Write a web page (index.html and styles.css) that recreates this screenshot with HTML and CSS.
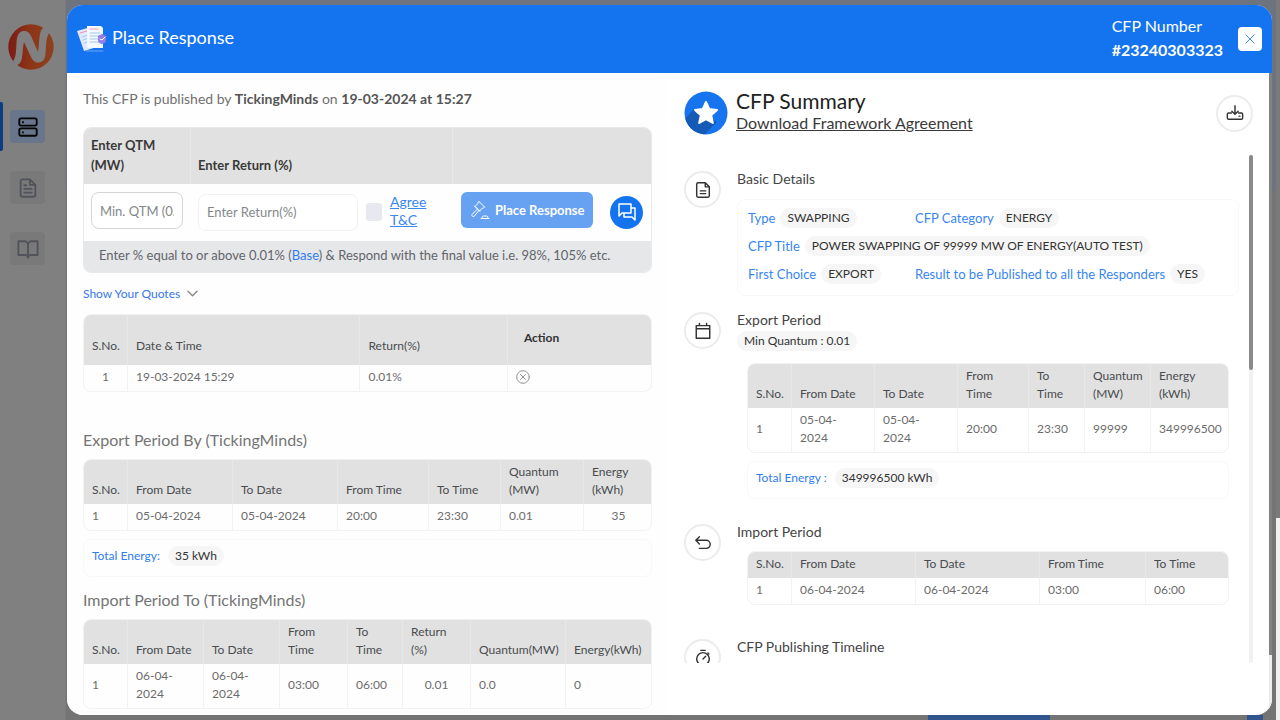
FILE: index.html
```html
<!DOCTYPE html>
<html lang="en">
<head>
<meta charset="utf-8">
<title>Place Response</title>
<link rel="stylesheet" href="styles.css">
</head>
<body>
<div class="page">
  <nav class="sidebar" aria-label="Main">
    <svg class="logo" viewBox="0 0 46 46" aria-hidden="true">
      <defs><linearGradient id="lg" x1="0" y1="0" x2="1" y2="0"><stop offset="0" stop-color="#7a1c15"/><stop offset=".5" stop-color="#8e3517"/><stop offset="1" stop-color="#8a4220"/></linearGradient></defs>
      <circle cx="23" cy="23" r="22.700" fill="url(#lg)"/>
      <path d="M5 37C8 34 8 27 8.500 19C9 11 11 7.500 15.500 7C19 6.600 21.500 8.500 23 12L30 28C31 22 31 15 32 10C33 5 35.500 2.500 39.500 3L41.500 8.500C38 13 38 22 37.500 29C37.200 36 34.500 38.500 30 38.500C26.500 38.500 24.500 36 23 33L16 18C14.500 23 15 29 14 34C13 39 10.500 41.500 8 41Z" fill="#808080"/>
    </svg>
    <a class="nav-item active" href="#" aria-label="Requests"><svg viewBox="0 0 24 24"><rect x="2.500" y="2.500" width="19" height="8" rx="2"/><rect x="2.500" y="13.500" width="19" height="8" rx="2"/><path d="M6.500 6.500v.5M6.500 17.500v.5"/></svg></a>
    <a class="nav-item" href="#" aria-label="Documents"><svg viewBox="0 0 24 24"><path d="M14 2.500H6a2 2 0 0 0-2 2v15a2 2 0 0 0 2 2h12a2 2 0 0 0 2-2V8.500zM14 2.500v6h6M8 9h2M8 13h8M8 17h8"/></svg></a>
    <a class="nav-item" href="#" aria-label="Library"><svg viewBox="0 0 24 24"><path d="M1.500 3.500h6.500a4 4 0 0 1 4 4v14a3 3 0 0 0-3-3H1.500zM22.500 3.500H16a4 4 0 0 0-4 4v14a3 3 0 0 1 3-3h7.500z"/></svg></a>
  </nav>
  <div class="backdrop"><span class="page-action"></span><span class="page-action small"></span></div>
  <div class="page-scroll"><span></span></div>
</div>

<div class="modal" role="dialog" aria-labelledby="dlg-title">
  <header class="modal-head">
    <svg class="papers" viewBox="0 0 30 28" aria-hidden="true">
      <path d="M0 6l14-4 6 20-13 4z" fill="#dfe9ff"/><path d="M3 8l7-2" stroke="#f08bb6" stroke-width="1"/><path d="M5 12l6-2M6 15l6-2M7 18l6-2" stroke="#a9c6f5"/>
      <path d="M10 1h14l2 2v20H12a2 2 0 0 1-2-2z" fill="#f5f8ff"/><path d="M13 4h8" stroke="#f29ac0"/><path d="M13 8h10M13 11h10M13 14h8M13 17h10" stroke="#9cc9ee"/><path d="M9 26h17" stroke="#6da6f8"/>
      <path d="M25 9l4 2v4q0 3-4 4-4-1-4-4v-4z" fill="#927ce6"/><path d="M23 14l2 1 3-3" fill="none" stroke="#fff"/>
    </svg>
    <h1 id="dlg-title">Place Response</h1>
    <div class="cfp-number"><span>CFP Number</span><strong>#23240303323</strong></div>
    <button class="close" type="button" aria-label="Close"><svg viewBox="0 0 12 12"><path d="M1 1l10 10M11 1L1 11"/></svg></button>
  </header>

  <div class="modal-body">
    <main class="response">
      <p class="published">This CFP is published by <strong>TickingMinds</strong> on <strong>19-03-2024 at 15:27</strong></p>

      <form class="quote-form">
        <div class="form-head"><label for="qtm">Enter QTM (MW)</label><label for="ret">Enter Return (%)</label><span></span></div>
        <div class="form-row">
          <input id="qtm" class="field strong-field" type="text" placeholder="Min. QTM (0.01)">
          <div class="return-cell">
            <input id="ret" class="field" type="text" placeholder="Enter Return(%)">
            <input id="agree" class="check" type="checkbox" aria-label="Agree T&amp;C">
            <a class="terms" href="#">Agree T&amp;C</a>
          </div>
          <div class="submit-cell">
            <button class="submit" type="button"><svg viewBox="0 0 20 20"><path d="M9 1.500l5.500 5.500M7.500 3L9 1.500M13 8.500L14.500 7M8 3.500L5 6.500l4.500 4.500 3-3M4.500 6L10 11.500M7 9.500L2 14.500a1.500 1.500 0 0 0 2 2L8.500 11M12 17.500q0-1.500 1.500-1.500h3q1.500 0 1.500 1.500M11 18.500h8"/></svg>Place Response</button>
            <button class="chat" type="button" aria-label="Chat"><svg viewBox="0 0 20 20"><path d="M2 2h12v9H5l-3 3zM14 6h4v12l-3-3H7v-4"/></svg></button>
          </div>
        </div>
        <p class="form-note">Enter % equal to or above 0.01% (<b>Base</b>) &amp; Respond with the final value i.e. 98%, 105% etc.</p>
      </form>

      <button class="toggle" type="button">Show Your Quotes<svg viewBox="0 0 12 8"><path d="M1 1l5 5 5-5"/></svg></button>

      <table class="grid quotes">
        <thead><tr><th>S.No.</th><th>Date &amp; Time</th><th>Return(%)</th><th class="action">Action</th></tr></thead>
        <tbody><tr><td class="center">1</td><td>19-03-2024 15:29</td><td>0.01%</td><td><button class="remove" type="button" aria-label="Remove quote"><svg viewBox="0 0 14 14"><circle cx="7" cy="7" r="6.300"/><path d="M4.500 4.500l5 5M9.500 4.500l-5 5"/></svg></button></td></tr></tbody>
      </table>

      <h2>Export Period By (TickingMinds)</h2>
      <table class="grid export">
        <thead><tr><th>S.No.</th><th>From Date</th><th>To Date</th><th>From Time</th><th>To Time</th><th>Quantum (MW)</th><th>Energy (kWh)</th></tr></thead>
        <tbody><tr><td>1</td><td>05-04-2024</td><td>05-04-2024</td><td>20:00</td><td>23:30</td><td>0.01</td><td class="center">35</td></tr></tbody>
      </table>
      <div class="total"><span class="key">Total Energy:</span><span class="pill">35 kWh</span></div>

      <h2>Import Period To (TickingMinds)</h2>
      <table class="grid import">
        <thead><tr><th>S.No.</th><th>From Date</th><th>To Date</th><th>From<br>Time</th><th>To<br>Time</th><th>Return<br>(%)</th><th>Quantum(MW)</th><th>Energy(kWh)</th></tr></thead>
        <tbody><tr><td>1</td><td>06-04-<br>2024</td><td>06-04-<br>2024</td><td>03:00</td><td>06:00</td><td class="center">0.01</td><td>0.0</td><td>0</td></tr></tbody>
      </table>
    </main>

    <aside class="summary">
      <header class="summary-head">
        <svg class="star" viewBox="0 0 44 44" aria-hidden="true"><defs><clipPath id="disc"><circle cx="22" cy="22" r="21.500"/></clipPath></defs><circle cx="22" cy="22" r="21.500" fill="#1674ef"/><path clip-path="url(#disc)" d="M10 18L0 29V44H20L33 31z" fill="#155ab5"/><path d="M22 11l3.200 7 7.800.9-5.800 5.300 1.600 7.800-6.800-3.900-6.800 3.900 1.600-7.800L11 18.900l7.800-.9z" fill="#fff" stroke="#fff" stroke-width="2" stroke-linejoin="round"/></svg>
        <div class="summary-title"><h2>CFP Summary</h2><a href="#">Download Framework Agreement</a></div>
        <button class="round" type="button" aria-label="Download"><svg viewBox="0 0 20 20"><path d="M10 2v9M6.500 8l3.500 3.500L13.500 8M6 10H3Q1.500 10 1.500 11.500v4Q1.500 17 3 17h14q1.500 0 1.500-1.500v-4Q18.500 10 17 10h-3M14.500 13.500h1"/></svg></button>
      </header>
      <div class="scroller">
        <div class="sections">
          <section>
            <span class="round"><svg viewBox="0 0 20 20"><path d="M12.500 2H4.500Q3 2 3 3.500v13Q3 18 4.500 18h11Q17 18 17 16.500v-10zM12.500 2v4.500H17M7 11h6M7 14h6"/></svg></span>
            <div class="content"><h3>Basic Details</h3>
              <dl class="details">
                <div><dt>Type</dt><dd class="pill">SWAPPING</dd></div>
                <div><dt>CFP Category</dt><dd class="pill">ENERGY</dd></div>
                <div class="wide"><dt>CFP Title</dt><dd class="pill">POWER SWAPPING OF 99999 MW OF ENERGY(AUTO TEST)</dd></div>
                <div><dt>First Choice</dt><dd class="pill">EXPORT</dd></div>
                <div><dt>Result to be Published to all the Responders</dt><dd class="pill">YES</dd></div>
              </dl>
            </div>
          </section>
          <section class="exports">
            <span class="round"><svg viewBox="0 0 20 20"><path d="M2.500 4h15v14h-15zM2.500 7.500h15M6 1.500V4M14 1.500V4"/></svg></span>
            <div class="content"><h3>Export Period</h3><span class="pill">Min Quantum : 0.01</span>
              <div class="inset">
                <table class="grid sum-export">
                  <thead><tr><th>S.No.</th><th>From Date</th><th>To Date</th><th>From<br>Time</th><th>To<br>Time</th><th>Quantum (MW)</th><th>Energy (kWh)</th></tr></thead>
                  <tbody><tr><td>1</td><td>05-04-<br>2024</td><td>05-04-<br>2024</td><td>20:00</td><td>23:30</td><td>99999</td><td>349996500</td></tr></tbody>
                </table>
                <div class="total"><span class="key">Total Energy :</span><span class="pill">349996500 kWh</span></div>
              </div>
            </div>
          </section>
          <section class="imports">
            <span class="round"><svg viewBox="0 0 20 20"><path d="M6 3L2 7l4 4M2 7h11.500a4.500 4.500 0 0 1 0 9H6"/></svg></span>
            <div class="content"><h3>Import Period</h3>
              <div class="inset">
                <table class="grid sum-import">
                  <thead><tr><th>S.No.</th><th>From Date</th><th>To Date</th><th>From Time</th><th>To Time</th></tr></thead>
                  <tbody><tr><td>1</td><td>06-04-2024</td><td>06-04-2024</td><td>03:00</td><td>06:00</td></tr></tbody>
                </table>
              </div>
            </div>
          </section>
          <section>
            <span class="round"><svg viewBox="0 0 20 20"><circle cx="10" cy="11" r="7"/><path d="M7.500 1.500h5M10 11l3-3M15.500 4.500l1 1"/></svg></span>
            <div class="content"><h3>CFP Publishing Timeline</h3></div>
          </section>
        </div>
        <div class="track"><span></span></div>
      </div>
    </aside>
    <div class="body-track"><span></span></div>
  </div>
</div>
</body>
</html>
```
FILE: styles.css
```css
* { box-sizing: border-box; }
body {
  margin: 0;
  height: 100vh;
  overflow: hidden;
  font-family: Lato, "Liberation Sans", sans-serif;
  font-size: 14px;
  line-height: 20px;
  color: #3c4043;
}
h1, h2, h3, p, dl, dd { margin: 0; font-weight: 400; }
button { border: 0; padding: 0; background: none; font: inherit; cursor: pointer; }
svg { display: block; flex: none; fill: none; stroke-linecap: round; stroke-linejoin: round; }

/* Page behind the dialog */
.page { display: flex; height: 100vh; background: #808080; }
.sidebar { width: 66px; padding-top: 24px; border-right: 1px solid #7b7b7b; }
.logo { width: 46px; height: 46px; margin: 0 0 40px 8px; }
.nav-item {
  display: grid;
  place-items: center;
  width: 35px;
  height: 33px;
  margin: 0 0 28px 10px;
  border-radius: 4px;
  background: #797979;
}
.nav-item svg { width: 22px; height: 22px; stroke: #505359; stroke-width: 2; }
.nav-item.active { position: relative; background: #69758a; }
.nav-item.active::before {
  content: "";
  position: absolute;
  left: -10px;
  top: -8px;
  width: 3px;
  height: 49px;
  border-radius: 0 2px 2px 0;
  background: #0b3d82;
}
.nav-item.active svg { stroke: #050505; }
.backdrop {
  flex: 1;
  display: flex;
  align-items: flex-end;
  justify-content: flex-end;
  gap: 197px;
  padding-right: 13px;
  background: linear-gradient(#6d7480 190px, #747474 190px);
}
.page-action { width: 122px; height: 5px; background: #30548c; }
.page-action.small { width: 16px; }
.page-scroll { width: 4px; background: #f1f1f1; }
.page-scroll span { display: block; height: 72%; background: #7a7a7a; }

/* Dialog */
.modal {
  position: fixed;
  inset: 5px 8px 5px 67px;
  display: flex;
  flex-direction: column;
  overflow: hidden;
  border-radius: 16px;
  background: #fff;
}
.modal-head {
  display: flex;
  align-items: center;
  flex: none;
  height: 68px;
  padding: 0 10px;
  background: #1473ee;
  color: #fff;
}
.papers { width: 30px; height: 28px; margin-right: 5px; }
.modal-head h1 { flex: 1; padding-bottom: 4px; font-size: 18px; line-height: 24px; }
.cfp-number { display: grid; margin-right: 15px; padding-bottom: 2px; font-size: 16px; line-height: 24px; }
.close { display: grid; place-items: center; width: 24px; height: 24px; border-radius: 4px; background: #fff; }
.close svg { width: 10px; height: 10px; stroke: #1473ee; }
.modal-body { display: flex; flex: 1; min-height: 0; }
.body-track { width: 3px; background: #ececec; }
.body-track span { display: block; height: 582px; background: #828282; }
.response { flex: 1 1 0; min-width: 0; padding: 16px 17px 0 16px; background: #fefefe; }
.summary { flex: 1 1 0; min-width: 0; padding: 18px 16px 0 15px; }

.published { font-size: 14px; color: #707070; margin-bottom: 18px; }
.published strong { color: #555; }

/* Quote form */
.quote-form { overflow: hidden; border: 1px solid #e8e9eb; border-radius: 8px; }
.form-head, .form-row { display: grid; grid-template-columns: 107px 1fr 198px; }
.form-head { height: 56px; background: #e1e1e1; font-size: 13px; font-weight: 700; color: #393939; }
.form-head > * { display: flex; align-items: flex-end; padding: 6px 24px 9px 7px; border-right: 1px solid #e8e8e8; }
.form-head > :last-child { border-right: 0; }
.form-row { height: 57px; align-items: center; }
.field {
  min-width: 0;
  height: 37px;
  padding: 0 8px;
  border: 1px solid #f0f1f2;
  border-radius: 8px;
  background: #fff;
  font: 13px Lato, "Liberation Sans", sans-serif;
  color: #444;
}
.field::placeholder { color: #85888b; opacity: 1; }
.strong-field { width: 92px; margin: 0 0 4px 7px; border-color: #d5d5d5; }
.return-cell { display: flex; align-items: center; gap: 8px; padding: 0 8px 1px 7px; }
.return-cell .field { flex: 0 1 160px; }
.check { flex: none; appearance: none; width: 16px; height: 18px; margin: 0; border-radius: 3px; background: #e8e9f0; }
.terms { width: 40px; padding-bottom: 3px; line-height: 18px; color: #3b86ef; }
.submit-cell { display: flex; align-items: center; justify-content: space-between; padding: 0 8px 1px; }
.submit {
  display: flex;
  align-items: center;
  gap: 5px;
  height: 36px;
  width: 132px;
  padding-left: 9px;
  margin-bottom: 4px;
  border-radius: 6px;
  background: #66a1f2;
  color: #fff;
  font-size: 13px;
  font-weight: 700;
  white-space: nowrap;
}
.submit svg { width: 20px; height: 20px; stroke: #fff; }
.chat { display: grid; place-items: center; width: 33px; height: 33px; border-radius: 50%; background: #1473ee; }
.chat svg { width: 20px; height: 20px; stroke: #fff; stroke-width: 1.500; }
.form-note { padding: 4px 15px 7px; background: #e6e7e9; color: #626569; font-size: 13px; }
.form-note b { font-weight: 400; color: #2f7df0; }

.toggle { display: flex; align-items: center; gap: 7px; margin: 11px 0 10px; color: #3577f0; font-size: 12px; }
.toggle svg { width: 11px; height: 8px; stroke: #888; stroke-width: 1.500; }

/* Tables and summary boxes */
.grid {
  width: 100%;
  table-layout: fixed;
  border-spacing: 0;
  overflow: hidden;
  border: 1px solid #f1f2f2;
  border-radius: 8px;
  font-size: 12px;
  line-height: 18px;
}
.grid th, .grid td { padding: 3px 8px 5px; border-right: 1px solid #f1f2f2; text-align: left; }
.grid th { background: #e1e1e1; border-color: #e8e8e8; color: #494c4f; font-weight: 400; vertical-align: bottom; }
.grid td { color: #6c6c6c; }
.grid th:last-child, .grid td:last-child { border-right: 0; }
.grid td:last-child, .sum-export th:last-child, .import th:last-child { padding-right: 6px; }
.grid th:first-child { width: 44px; padding-right: 0; }
.grid .center { text-align: center; }
.grid .action { padding: 0 16px 4px; vertical-align: middle; font-weight: 700; color: #333; }
.quotes { margin-bottom: 38px; }
.quotes th { height: 50px; padding-bottom: 10px; }
.quotes th:nth-child(2) { width: 41%; }
.quotes th:nth-child(3) { width: 26%; }
.export th:nth-child(2), .export th:nth-child(3) { width: 105px; }
.export th:nth-child(4) { width: 91px; }
.export th:nth-child(5) { width: 72px; }
.export th:nth-child(6) { width: 83px; }
.import th:nth-child(2), .import th:nth-child(3) { width: 76px; }
.import th:nth-child(4) { width: 68px; }
.import th:nth-child(5) { width: 55px; }
.import th:nth-child(6) { width: 68px; }
.import th:nth-child(7) { width: 95px; }
.sum-export th:nth-child(2), .sum-export th:nth-child(3) { width: 83px; }
.sum-export th:nth-child(4) { width: 71px; }
.sum-export th:nth-child(5) { width: 56px; }
.sum-export th:nth-child(6) { width: 66px; }
.sum-import th:nth-child(2), .sum-import th:nth-child(3) { width: 124px; }
.sum-import th:nth-child(4) { width: 106px; }
.sum-export th, .import th { padding-right: 4px; }
.remove { display: block; }
.remove svg { width: 14px; height: 14px; stroke: #929292; }
.response h2 { margin-bottom: 9px; font-size: 16px; color: #747474; }
.total {
  display: flex;
  align-items: center;
  gap: 8px;
  height: 38px;
  margin: 8px 0 13px;
  padding: 0 8px 4px;
  border: 1px solid #f8f8f8;
  border-radius: 8px;
  font-size: 12px;
}
.total .key { color: #2f7df0; }
.pill { display: inline-block; padding: 0 7px; border-radius: 10px; background: #f6f6f6; color: #333; font-size: 12px; line-height: 20px; white-space: nowrap; }

/* Summary column */
.summary-head { display: flex; align-items: center; padding-bottom: 20px; }
.star { width: 44px; height: 44px; margin-right: 8px; }
.summary-title { flex: 1; padding-bottom: 2px; }
.summary-title h2 { font-size: 21px; line-height: 22px; color: #222; }
.summary-title a { display: block; font-size: 16px; line-height: 22px; color: #3a3a3a; }
.round { display: grid; flex: none; place-items: center; width: 37px; height: 37px; border: 2px solid #ececec; border-radius: 50%; background: #fff; }
.round svg { width: 18px; height: 18px; stroke: #333; stroke-width: 1.600; }
.summary-head { height: 64px; }
.scroller { display: flex; gap: 10px; height: calc(100vh - 212px); overflow: hidden; }
.sections { flex: 1; min-width: 0; }
.track { width: 4px; border-radius: 2px; background: #f1f1f1; }
.track span { display: block; height: 215px; border-radius: 2px; background: #8a8a8a; }
.sections section { display: flex; gap: 16px; padding-top: 16px; }
.content { flex: 1; min-width: 0; margin-top: -2px; }
.sections h3 { font-size: 14px; color: #444; }
.details {
  display: grid;
  grid-template-columns: 167px 1fr;
  row-gap: 8px;
  margin-top: 10px;
  padding: 8px 10px 11px;
  border: 1px solid #f8f8f8;
  border-radius: 8px;
}
.details div { display: flex; gap: 5px; white-space: nowrap; }
.details .wide { grid-column: 1 / -1; }
.details dt { color: #3886f2; font-size: 13px; }
.inset { padding: 0 10px; }
.exports .inset { padding-top: 12px; }
.imports .inset { padding-top: 9px; }
.exports .total { margin-bottom: 9px; }
.imports { margin-bottom: 18px; }
```
